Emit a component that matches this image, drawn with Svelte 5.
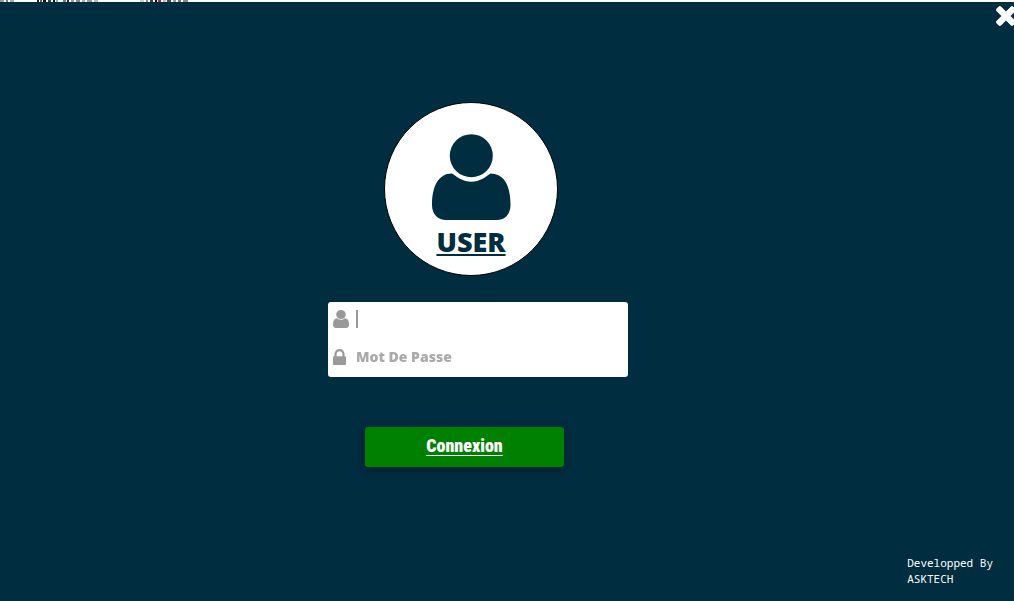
<script>
    import {onMount} from "svelte";

    let nom = "";
    let motDePasse = "";
    let champNom;
    let ouvert = true;

    // traces of the window behind the login screen: [x, width, color]
    const traces = [
        [0, 4, "#9a9a9a"], [6, 2, "#777"], [10, 4, "#aab"],
        [37, 2, "#223"], [40, 2, "#467"], [43, 3, "#111"], [48, 3, "#345"],
        [53, 2, "#211"], [56, 2, "#8ac"], [63, 3, "#778"], [67, 2, "#223"],
        [71, 3, "#999"], [76, 4, "#888"], [82, 3, "#aaa"], [87, 5, "#999"], [94, 4, "#bbb"],
        [140, 4, "#ccd"], [146, 2, "#889"], [150, 3, "#345"], [155, 2, "#111"],
        [158, 3, "#934"], [163, 3, "#bbb"], [167, 4, "#445"], [173, 3, "#999"],
        [178, 3, "#777"], [183, 5, "#888"]
    ];

    function connexion() {
        console.log("Connexion:", nom);
    }

    function fermer() {
        ouvert = false;
    }

    onMount(() => {
        champNom.focus()
    })
</script>

<style>
    :global(body) {
        margin: 0;
        background-color: #002d40;
    }

    .page {
        display: flex;
        flex-direction: column;
        min-height: 100vh;
        overflow: hidden;
        background-color: #002d40;
        font-family: "Noto Sans", "Open Sans", sans-serif;
    }

    .traces {
        display: block;
        width: 100%;
        height: 2px;
        background-color: white;
    }

    .entete {
        display: flex;
        justify-content: flex-end;
        padding-top: 4px;
        margin-right: -2px;
    }

    .btn__fermer {
        display: block;
        padding: 0;
        border: none;
        background: none;
        color: white;
        cursor: pointer;
    }

    .btn__fermer svg {
        display: block;
        width: 20px;
        height: 20px;
        fill: currentColor;
    }

    .login {
        display: flex;
        flex-direction: column;
        align-items: center;
        padding: 76px 58px 0 0;
    }

    .avatar {
        box-sizing: border-box;
        display: flex;
        flex-direction: column;
        align-items: center;
        width: 174px;
        height: 174px;
        margin-right: 14px;
        padding-top: 31px;
        border: 1px solid black;
        border-radius: 50%;
        background-color: white;
        color: #002d40;
    }

    .avatar svg {
        width: 79px;
        height: 86px;
        fill: currentColor;
    }

    .avatar h1 {
        margin: 4px 0 0;
        font-size: 27px;
        font-weight: 900;
        line-height: 36px;
        text-decoration: underline;
        text-decoration-thickness: 2px;
        text-underline-offset: 2px;
    }

    .champs {
        display: flex;
        flex-direction: column;
        gap: 1px;
        width: 300px;
        margin-top: 26px;
        border-radius: 3px;
        background-color: white;
    }

    .champ {
        box-sizing: border-box;
        display: flex;
        align-items: center;
        height: 37px;
        padding: 0 0 4px 5px;
        color: #999;
        position: relative;
    }

    .champ label {
        display: flex;
        width: 23px;
    }

    .champ svg {
        width: 16px;
        height: 18px;
        fill: currentColor;
    }

    .champ .cadenas {
        width: 13px;
        height: 16px;
    }

    .champ input {
        flex: 1;
        min-width: 0;
        padding: 0;
        border: none;
        outline: none;
        background: none;
        color: #777;
        caret-color: transparent;
        font-family: inherit;
        font-size: 14px;
        font-weight: 900;
    }

    .champ input::placeholder {
        color: #aaa;
        opacity: 1;
    }

    .curseur {
        position: absolute;
        left: 28px;
        width: 2px;
        height: 18px;
        background-color: #999;
        pointer-events: none;
    }

    .btn__connexion {
        width: 199px;
        height: 40px;
        margin: 50px 27px 0 0;
        padding: 0 0 3px;
        border: none;
        border-radius: 3px;
        background-color: green;
        box-shadow: 0 3px 10px rgba(0, 0, 0, 0.3);
        color: white;
        cursor: pointer;
        font-family: Impact, "Roboto Condensed", "Liberation Sans Narrow", sans-serif;
        font-size: 18px;
        font-weight: 900;
        text-decoration: underline;
        text-decoration-thickness: 1px;
        text-underline-offset: 3px;
    }

    footer {
        align-self: flex-end;
        margin-top: auto;
        padding: 0 21px 14px 0;
        color: white;
        font-family: "Noto Sans Mono", "DejaVu Sans Mono", monospace;
        font-size: 11px;
        line-height: 16px;
    }
</style>

{#if ouvert}
<div class="page">
    <svg class="traces" aria-hidden="true">
        {#each traces as [x, largeur, couleur]}
            <rect {x} y="0" width={largeur} height="2" fill={couleur} />
        {/each}
    </svg>

    <div class="entete">
        <button type="button" class="btn__fermer" aria-label="Fermer" on:click={fermer}>
            <svg viewBox="302 366 1188 1188">
                <path d="M1490 1322q0 40-28 68l-136 136q-28 28-68 28t-68-28l-294-294-294 294q-28 28-68 28t-68-28l-136-136q-28-28-28-68t28-68l294-294-294-294q-28-28-28-68t28-68l136-136q28-28 68-28t68 28l294 294 294-294q28-28 68-28t68 28l136 136q28 28 28 68t-28 68l-294 294 294 294q28 28 28 68z" />
            </svg>
        </button>
    </div>

    <form class="login" on:submit|preventDefault={connexion}>
        <div class="avatar">
            <svg viewBox="0 0 79 86" aria-hidden="true">
                <circle cx="39.3" cy="21.7" r="21.5" />
                <path d="M20 39.5C25 43 31 47.7 39.3 47.7S53.5 43 58.5 39.5C73 39.5 78.5 53 78.5 71C78.5 80 73 86 65 86H14C6 86 0 80 0 71C0 53 6 39.5 20 39.5Z" />
            </svg>
            <h1>USER</h1>
        </div>

        <div class="champs">
            <div class="champ">
                <label for="nom" aria-label="Utilisateur">
                    <svg viewBox="256 128 1280 1536" preserveAspectRatio="none">
                        <path d="M1536 1399q0 109-62.5 187t-150.5 78h-854q-88 0-150.5-78t-62.5-187q0-85 8.5-160.5t31.5-152 58.5-131 94-89 134.5-34.5q131 128 313 128t313-128q76 0 134.5 34.5t94 89 58.5 131 31.5 152 8.5 160.5zm-256-887q0 159-112.5 271.5t-271.5 112.5-271.5-112.5-112.5-271.5 112.5-271.5 271.5-112.5 271.5 112.5 112.5 271.5z" />
                    </svg>
                </label>
                <input id="nom" type="text" autocomplete="off" bind:value={nom} bind:this={champNom} />
                {#if nom === ""}
                    <span class="curseur"></span>
                {/if}
            </div>
            <div class="champ">
                <label for="mdp" aria-label="Mot de passe">
                    <svg class="cadenas" viewBox="320 128 1152 1408">
                        <path d="M640 768h512v-192q0-106-75-181t-181-75-181 75-75 181v192zm832 96v576q0 40-28 68t-68 28h-960q-40 0-68-28t-28-68v-576q0-40 28-68t68-28h32v-192q0-184 132-316t316-132 316 132 132 316v192h32q40 0 68 28t28 68z" />
                    </svg>
                </label>
                <input id="mdp" type="password" placeholder="Mot De Passe" bind:value={motDePasse} />
            </div>
        </div>

        <button type="submit" class="btn__connexion">Connexion</button>
    </form>

    <footer>Developped By<br />ASKTECH</footer>
</div>
{/if}
